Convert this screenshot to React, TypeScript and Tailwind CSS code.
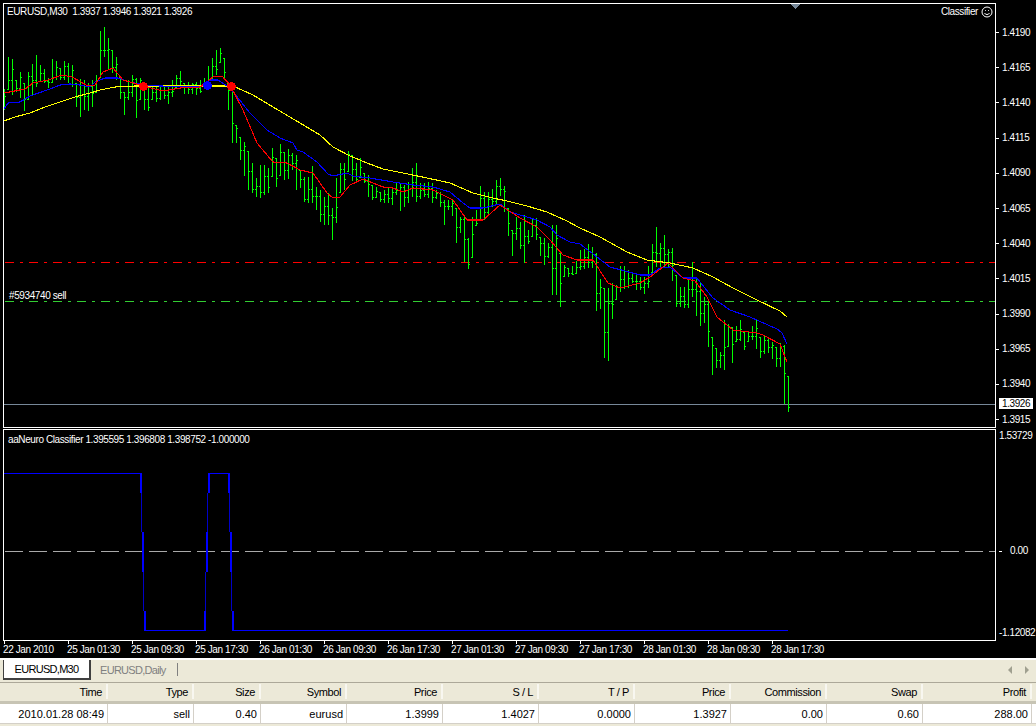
const bars: [number, number][] = [
  [89, 110], [57, 90], [59, 95], [80, 92], [72, 98], [83, 111], [72, 100], [64, 95], [55, 87], [65, 82],
  [69, 83], [78, 88], [59, 83], [61, 80], [68, 80], [61, 80], [63, 83], [65, 87], [83, 107], [79, 117],
  [80, 110], [83, 111], [80, 107], [75, 93], [31, 78], [27, 57], [38, 70], [50, 73], [57, 80], [77, 99],
  [92, 115], [80, 100], [75, 97], [78, 118], [78, 100], [88, 110], [87, 111], [87, 100], [85, 102], [85, 100],
  [85, 99], [87, 104], [80, 97], [75, 88], [71, 88], [83, 94], [82, 94], [83, 94], [82, 95], [80, 93],
  [78, 87], [66, 83], [58, 80], [50, 75], [48, 63], [58, 78], [83, 110], [90, 143], [125, 143], [137, 160],
  [142, 176], [151, 190], [163, 193], [178, 197], [165, 198], [165, 195], [168, 193], [148, 177], [158, 187], [144, 176],
  [152, 180], [149, 179], [153, 170], [155, 190], [170, 188], [177, 202], [177, 203], [166, 203], [187, 210], [190, 222],
  [197, 225], [193, 225], [208, 240], [178, 223], [163, 193], [163, 190], [151, 172], [155, 181], [163, 181], [158, 178],
  [173, 183], [175, 197], [185, 200], [187, 198], [192, 202], [190, 203], [188, 203], [188, 205], [183, 195], [183, 211],
  [185, 207], [182, 203], [168, 197], [163, 202], [183, 199], [183, 197], [182, 198], [183, 203], [190, 199], [192, 207],
  [200, 225], [200, 210], [200, 216], [208, 243], [217, 233], [217, 262], [238, 269], [217, 258], [210, 226], [186, 220],
  [192, 220], [192, 215], [189, 207], [180, 205], [178, 196], [186, 212], [208, 236], [230, 256], [217, 240], [222, 249],
  [215, 263], [230, 244], [218, 237], [218, 240], [237, 256], [238, 265], [243, 258], [225, 295], [225, 295], [253, 307],
  [265, 277], [268, 277], [266, 275], [261, 274], [250, 270], [249, 269], [244, 268], [247, 268], [253, 311], [279, 309],
  [288, 358], [288, 361], [283, 319], [285, 300], [266, 292], [266, 289], [270, 288], [272, 283], [275, 290], [277, 290],
  [277, 294], [266, 288], [244, 273], [227, 267], [243, 268], [235, 268], [249, 267], [248, 281], [275, 307], [287, 307],
  [287, 308], [277, 308], [262, 297], [278, 316], [282, 326], [297, 323], [300, 347], [337, 375], [348, 368], [352, 368],
  [320, 370], [324, 347], [327, 363], [326, 342], [320, 341], [332, 350], [332, 342], [326, 340], [319, 349], [337, 358],
  [336, 354], [337, 353], [342, 359], [347, 367], [343, 367], [345, 404], [376, 412],
];

const yellowLine =
  "4,121 15,117 30,113 45,107 60,102 75,97 90,93 100,90 115,87 135,86 160,86 200,86 233,86 253,95 273,107 300,123 320,135 333,147 350,156 367,163 383,169 403,173 427,178 450,183 473,193 493,198 507,201 527,206 547,212 567,221 580,228 600,237 627,252 647,260 670,263 693,268 713,277 733,288 757,300 780,311 787,317";
const blueLine =
  "4,109 8,103 20,102 30,96 50,89 60,85 70,84 80,85 90,87 95,82 105,78 118,78 130,82 145,85 160,86 200,87 210,80 218,80 230,88 250,113 267,130 280,138 293,143 297,150 303,152 317,162 328,174 333,176 347,173 353,176 370,178 393,182 413,185 433,187 450,192 463,203 470,208 483,208 500,204 510,212 527,217 537,220 550,227 557,235 570,242 580,244 597,257 610,267 640,275 650,275 660,268 670,267 683,278 697,278 713,298 730,310 750,317 777,329 782,333 787,344";
const redLine =
  "4,93 25,89 33,83 48,80 62,75 72,77 88,86 95,85 103,72 113,68 123,80 147,87 163,91 180,88 200,87 213,77 222,76 230,85 243,110 257,143 273,162 287,163 300,170 313,173 327,193 333,198 340,197 350,185 363,179 383,187 393,188 403,192 413,188 433,190 453,200 467,220 483,220 500,205 520,218 537,227 550,240 563,255 577,260 593,260 608,283 620,288 640,283 650,277 668,263 675,270 683,278 695,281 707,297 717,317 733,330 757,333 763,335 780,344 787,362";

const priceLabels = ["1.4190", "1.4165", "1.4140", "1.4115", "1.4090", "1.4065", "1.4040", "1.4015", "1.3990", "1.3965", "1.3940", "1.3915"];
const timeLabels = ["22 Jan 2010", "25 Jan 01:30", "25 Jan 09:30", "25 Jan 17:30", "26 Jan 01:30", "26 Jan 09:30", "26 Jan 17:30", "27 Jan 01:30", "27 Jan 09:30", "27 Jan 17:30", "28 Jan 01:30", "28 Jan 09:30", "28 Jan 17:30"];

const columns = [
  { w: "w-[108px]", head: "Time", value: "2010.01.28 08:49" },
  { w: "w-[86px]", head: "Type", value: "sell" },
  { w: "w-[67px]", head: "Size", value: "0.40" },
  { w: "w-[86px]", head: "Symbol", value: "eurusd" },
  { w: "w-[96px]", head: "Price", value: "1.3999" },
  { w: "w-[96px]", head: "S / L", value: "1.4027" },
  { w: "w-[96px]", head: "T / P", value: "0.0000" },
  { w: "w-[96px]", head: "Price", value: "1.3927" },
  { w: "w-[96px]", head: "Commission", value: "0.00" },
  { w: "w-[96px]", head: "Swap", value: "0.60" },
  { w: "w-[109px]", head: "Profit", value: "288.00" },
];

// open/close ticks, the close of one bar is the open of the next
function closeOf(i: number) {
  const [high, low] = bars[i];
  return Math.round(high + (low - high) * (((i * 37 + 23) % 80) / 100 + 0.1));
}

function MainChart() {
  return (
    <svg width={991} height={423} viewBox="4 4 991 423" shapeRendering="crispEdges" className="block">
      <line x1={5} x2={995} y1={262.5} y2={262.5} stroke="#ff0000" strokeDasharray="9 6 3 6" />
      <line x1={5} x2={995} y1={301.5} y2={301.5} stroke="#32cd32" strokeDasharray="9 6 3 6" />
      <line x1={4} x2={995} y1={404.5} y2={404.5} stroke="#778899" />
      {bars.map(([high, low], i) => {
        const x = 4 + i * 4;
        const close = closeOf(i);
        const open = i > 0 ? Math.min(low - 1, Math.max(high, closeOf(i - 1))) : high + 5;
        return (
          <g key={i} fill="#00ff00">
            <rect x={x} y={high} width={1} height={low - high} />
            <rect x={x - 1} y={open} width={1} height={1} />
            <rect x={x + 1} y={close} width={1} height={1} />
          </g>
        );
      })}
      <polyline points={yellowLine} fill="none" stroke="#ffff00" strokeWidth={1.1} />
      <polyline points={blueLine} fill="none" stroke="#0000ff" strokeWidth={1.1} />
      <polyline points={redLine} fill="none" stroke="#ff0000" strokeWidth={1.1} />
      <circle cx={143.5} cy={86.5} r={4.5} fill="#ff0000" />
      <circle cx={207.5} cy={85.5} r={4.5} fill="#0000ff" />
      <circle cx={231.5} cy={86.5} r={4.5} fill="#ff0000" />
      <polygon points="790,4 800,4 795,9" fill="#778899" />
    </svg>
  );
}

function SubChart() {
  return (
    <svg width={991} height={210} viewBox="4 430 991 210" shapeRendering="crispEdges" className="block">
      <line x1={5} x2={995} y1={551.5} y2={551.5} stroke="#a9a9a9" strokeDasharray="18 6" />
      <g fill="none" stroke="#0000ff">
        <path d="M4 473.5H140M208 473.5H228M144 630.5H204M232 630.5H788" />
      </g>
      <g fill="#0000ff">
        <rect x={140} y={473} width={2} height={20} />
        <rect x={142} y={532} width={2} height={40} />
        <rect x={144} y={611} width={2} height={20} />
        <rect x={204} y={611} width={2} height={20} />
        <rect x={206} y={532} width={2} height={40} />
        <rect x={208} y={473} width={2} height={20} />
        <rect x={228} y={473} width={2} height={20} />
        <rect x={230} y={532} width={2} height={40} />
        <rect x={232} y={611} width={2} height={20} />
      </g>
      <g fill="#0000c8">
        <rect x={141} y={493} width={1} height={39} />
        <rect x={143} y={572} width={1} height={39} />
        <rect x={205} y={572} width={1} height={39} />
        <rect x={207} y={493} width={1} height={39} />
        <rect x={229} y={493} width={1} height={39} />
        <rect x={231} y={572} width={1} height={39} />
      </g>
    </svg>
  );
}

export default function App() {
  return (
    <div className="flex h-[726px] w-[1036px] flex-col overflow-hidden bg-[#ece9d8] font-['Liberation_Sans',Arial,sans-serif] text-[11px] leading-[14px] text-black">
      {/* chart window */}
      <div className="flex h-[658px] flex-col bg-black pt-[3px] pl-[3px] text-[10px] tracking-[-0.4px] text-white">
        <div className="flex h-[425px]">
          <div className="relative h-[425px] w-[993px] border border-white">
            <MainChart />
            <span className="absolute top-px left-[3px] whitespace-pre">EURUSD,M30  1.3937 1.3946 1.3921 1.3926</span>
            <span className="absolute top-[285px] left-[5px]">#5934740 sell</span>
            <div className="absolute top-px right-[2px] flex items-center gap-[3px]">
              <span>Classifier</span>
              <svg width={12} height={12} viewBox="0 0 12 12" fill="none" stroke="white">
                <circle cx={6} cy={6} r={5} />
                <path d="M3.5 7a2.8 2.8 0 0 0 5 0M4 4.5h.8M7.2 4.5h.8" />
              </svg>
            </div>
          </div>
          <div className="relative flex-1 pt-[12px]">
            {priceLabels.map((label) => (
              <div key={label} className="flex h-[35.2px] items-center gap-[3px]">
                <div className="h-px w-[3px] bg-white" />
                <span>{label}</span>
              </div>
            ))}
            <div className="absolute top-[395px] left-[3px] h-[11px] w-[34px] bg-white pl-[3px] leading-[11px] text-black">1.3926</div>
          </div>
        </div>
        <div className="mt-px flex h-[212px]">
          <div className="relative h-[212px] w-[993px] border border-white">
            <SubChart />
            <span className="absolute top-[3px] left-[4px]">aaNeuro Classifier 1.395595 1.396808 1.398752 -1.000000</span>
          </div>
          <div className="flex-1 pl-[3px]">
            <div>1.53729</div>
            <div className="mt-[101px] flex items-center gap-[8px]">
              <div className="h-px w-[3px] bg-white" />
              <span>0.00</span>
            </div>
            <div className="mt-[68px]">-1.12082</div>
          </div>
        </div>
        <div className="flex">
          {timeLabels.map((label) => (
            <div key={label} className="w-[64px] shrink-0 whitespace-nowrap">
              <div className="ml-px h-[3px] w-px bg-white" />
              <div className="-mt-px">{label}</div>
            </div>
          ))}
        </div>
      </div>

      {/* tabs */}
      <div className="flex h-[22px] items-start border-t-2 border-white pl-[3px] tracking-[-0.7px]">
        <div className="h-[20px] w-[88px] border-r-2 border-b-2 border-l border-r-[#404040] border-b-[#404040] border-l-[#404040] bg-white pt-[2px] text-center">EURUSD,M30</div>
        <div className="ml-[9px] pt-[3px] text-[#808080]">EURUSD,Daily</div>
        <div className="mt-[3px] ml-[11px] h-[13px] w-px bg-[#808080]" />
        <div className="ml-auto flex items-center gap-[13px] pt-[6px] pr-[6px]">
          <svg width={5} height={8} viewBox="0 0 5 8" fill="#a0a090"><polygon points="5,0 5,8 1,4" /></svg>
          <svg width={5} height={8} viewBox="0 0 5 8" fill="#a0a090"><polygon points="0,0 0,8 4,4" /></svg>
        </div>
      </div>

      {/* trade table */}
      <div className="mt-[2px] border-t border-[#aca899]">
        <div className="flex h-[18px] items-start pt-px tracking-[-0.4px]">
          {columns.map((col, i) => (
            <div key={i} className={`${col.w} h-[15px] shrink-0 border-r-2 border-r-[#f8f7f0] pt-[2px] pr-[4px] text-right leading-[13px]`}>{col.head}</div>
          ))}
        </div>
        <div className="h-[3px] bg-[#c7c4b4]" />
        <div className="flex h-[20px] items-center border-b border-[#d4d0c8] bg-white">
          {columns.map((col, i) => (
            <div key={i} className={`${col.w} flex h-full shrink-0 items-center justify-end border-r border-[#d4d0c8] pt-px pr-[3px]`}>{col.value}</div>
          ))}
        </div>
      </div>
    </div>
  );
}
